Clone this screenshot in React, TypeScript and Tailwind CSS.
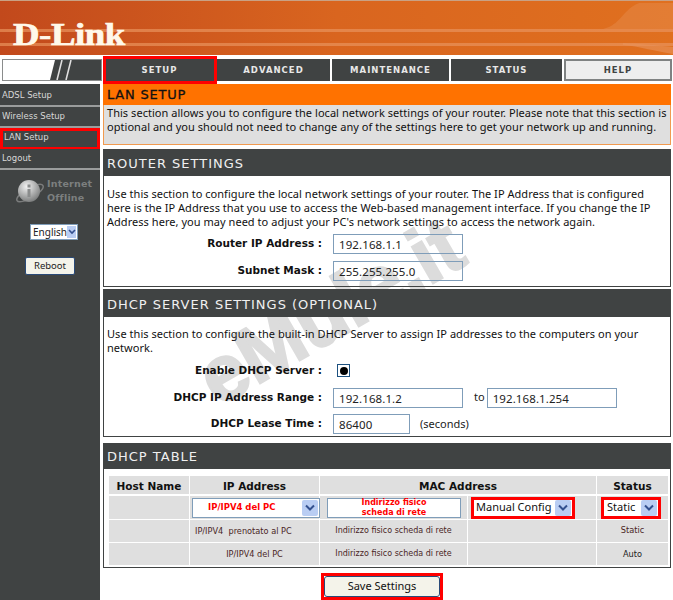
const sans = "font-['Tahoma','Noto_Sans','Liberation_Sans',sans-serif]";

function Chevron() {
  return (
    <span className="flex h-[16px] w-[16px] shrink-0 items-center justify-center rounded-[2px] bg-[#b9cdf3]">
      <svg width="10" height="7" viewBox="0 0 10 7">
        <path d="M1 1.5 L5 5.5 L9 1.5" fill="none" stroke="#33508f" strokeWidth="2" />
      </svg>
    </span>
  );
}

function Tab({ label, w, active }: { label: string; w: string; active?: boolean }) {
  return (
    <div
      className={`flex h-[22px] items-center justify-center text-[8.5px] font-bold tracking-[1px] font-['DejaVu_Sans',sans-serif] ${w} ${
        active ? 'border-2 border-[#7f8282] bg-[#eeeeee] text-[#404343]' : 'bg-[#404343] text-[#e8e8e8]'
      }`}
    >
      {label}
    </div>
  );
}

function SideItem({ label, red }: { label: string; red?: boolean }) {
  return (
    <div
      className={`flex h-[21px] items-center whitespace-nowrap border-b-2 border-[#9a9c9c] pl-[2px] text-[8.5px] text-[#d8d8d8] font-['DejaVu_Sans',sans-serif] ${
        red ? 'border-[3px] border-[#ff0000] pb-[3px] pl-0' : ''
      }`}
    >
      {red ? <span className="-ml-[1px]">{label}</span> : label}
    </div>
  );
}

function SectionHead({ children, h }: { children: string; h: string }) {
  return (
    <div className={`flex items-center whitespace-nowrap bg-[#404343] pl-[3px] pt-[2px] text-[13px] tracking-[1px] text-[#f0f0f0] font-['DejaVu_Sans',sans-serif] ${h}`}>
      {children}
    </div>
  );
}

function Row({ label, children, h }: { label: string; children: React.ReactNode; h: string }) {
  return (
    <div className={`flex items-center ${h}`}>
      <div className="w-[221px] whitespace-nowrap pr-[11px] pt-[1px] text-right text-[10.5px] font-bold text-[#111] font-['DejaVu_Sans',sans-serif]">{label}</div>
      {children}
    </div>
  );
}

function TextBox({ value, w }: { value: string; w: string }) {
  return (
    <div className={`flex h-[20px] items-center border border-[#7f9db9] pl-[5px] pt-[2px] text-[11.5px] tracking-[0.1px] text-[#222] ${w}`}>
      {value}
    </div>
  );
}

function Cell({ children, w, className = '' }: { children?: React.ReactNode; w: string; className?: string }) {
  return <div className={`flex items-center justify-center whitespace-nowrap bg-[#dfdfdf] ${w} ${className}`}>{children}</div>;
}

const para = 'whitespace-nowrap pl-[3px] text-[11px] leading-[14px] tracking-[0.04px]';

export default function App() {
  return (
    <div className={`relative h-[600px] w-[673px] overflow-hidden bg-white text-[11px] text-[#111] ${sans}`}>
      <div className="relative h-[55px] border-t border-[#c9a184] bg-gradient-to-r from-[#c2491c] via-[#d9651f] to-[#e0701f]">
        <div className="absolute inset-x-0 top-[28px] h-[3px] bg-[#e8935c]/70" />
        <div className="absolute inset-x-0 top-[42px] h-[3px] bg-[#e8935c]/70" />
        <svg className="absolute right-0 top-0" width="80" height="54" viewBox="0 0 80 54">
          <path d="M10 28 C28 24 30 8 46 2 L80 2 L80 28 Z" fill="#e58a4a" opacity="0.5" />
          <path d="M30 44 C50 46 60 50 80 53 L80 46 C60 44 50 43 30 42 Z" fill="#e8935c" opacity="0.6" />
        </svg>
        <div className="absolute left-[13px] top-[15px] origin-left scale-x-[1.15] text-[32px] font-bold leading-[36px] tracking-[-0.4px] text-[#fff8ea] [-webkit-text-stroke:0.7px_#fff8ea] font-['Liberation_Serif',serif]">
          D-Link
        </div>
      </div>

      <div className="mt-[3px] flex h-[24px] items-center pl-[2px]">
        <svg className="shrink-0" width="100" height="22" viewBox="0 0 100 22">
          <rect x="0" y="0" width="100" height="22" fill="#404343" />
          <path d="M1 1 H53 L48 21 H1 Z" fill="#ffffff" />
          <path d="M60 1 L55 21" stroke="#e0e0e0" strokeWidth="1.6" />
          <path d="M69 1 L64 21" stroke="#e0e0e0" strokeWidth="1.6" />
          <rect x="0.5" y="0.5" width="99" height="21" fill="none" stroke="#8a8c8c" />
        </svg>
        <div className="ml-[2px] flex gap-[2px]">
          <Tab label="SETUP" w="w-[111px]" />
          <Tab label="ADVANCED" w="w-[113px]" />
          <Tab label="MAINTENANCE" w="w-[117px]" />
          <Tab label="STATUS" w="w-[111px]" />
          <Tab label="HELP" w="w-[108px]" active />
        </div>
      </div>
      <div className="absolute left-[103px] top-[56px] h-[28px] w-[114px] border-[3px] border-[#ff0000]" />

      <div className="mt-[2px] flex">
        <aside className="h-[516px] w-[100px] shrink-0 bg-[#404343] pt-[2px]">
          <SideItem label="ADSL Setup" />
          <SideItem label="Wireless Setup" />
          <SideItem label="LAN Setup" red />
          <SideItem label="Logout" />
          <div className="mt-[5px] flex items-center pl-[14px]">
            <svg width="32" height="32" viewBox="0 0 32 32" className="shrink-0">
              <defs>
                <radialGradient id="g" cx="0.4" cy="0.3" r="0.8">
                  <stop offset="0" stopColor="#f2f2f2" />
                  <stop offset="1" stopColor="#6e7070" />
                </radialGradient>
              </defs>
              <ellipse cx="16" cy="18" rx="15" ry="5" fill="none" stroke="#7a7c7c" strokeWidth="1.5" transform="rotate(-30 16 18)" />
              <circle cx="15" cy="16" r="11" fill="url(#g)" />
              <rect x="13.5" y="14" width="3" height="8" fill="#8a8c8c" />
              <rect x="13.5" y="9.5" width="3" height="3" fill="#8a8c8c" />
            </svg>
            <div className="ml-[1px] text-[9.5px] font-bold leading-[14px] tracking-[0.2px] text-[#7c7f7f] font-['DejaVu_Sans',sans-serif]">
              Internet
              <br />
              Offline
            </div>
          </div>
          <div className="ml-[30px] mt-[17px] flex h-[16px] w-[48px] items-center justify-between border border-[#7f9db9] bg-white pl-[2px] pr-[1px] text-[10px] text-[#222]">
            English
            <span className="flex h-[12px] w-[12px] items-center justify-center bg-[#b9cdf3]">
              <svg width="8" height="6" viewBox="0 0 8 6"><path d="M1 1 L4 4 L7 1" fill="none" stroke="#33508f" strokeWidth="1.6" /></svg>
            </span>
          </div>
          <div className="ml-[25px] mt-[17px] flex h-[18px] w-[50px] items-center justify-center rounded-[2px] border border-[#2a4a78] bg-[#f4f3ea] text-[9.5px] text-[#222]">
            Reboot
          </div>
        </aside>

        <main className="relative ml-[3px] w-[568px]">
          <div
            aria-hidden
            className="absolute left-[82px] top-[188px] -rotate-[30deg] select-none whitespace-nowrap text-[80px] font-bold leading-none tracking-[-1px] text-[#dcdcdc] [-webkit-text-stroke:2px_#dcdcdc] font-['Liberation_Sans',sans-serif]"
          >
            eMule.it
          </div>

          <section className="relative h-[61px] border border-t-0 border-[#f19a4f]">
            <div className="-mx-[1px] flex h-[21px] items-center bg-[#ff7200] pl-[4px] text-[13px] tracking-[0.8px] text-[#111] [-webkit-text-stroke:0.3px_#111] font-['DejaVu_Sans',sans-serif]">
              LAN SETUP
            </div>
            <div className={`h-[39px] bg-[#dfdfdf] pt-[1px] ${para}`}>
              <p>This section allows you to configure the local network settings of your router. Please note that this section is</p>
              <p>optional and you should not need to change any of the settings here to get your network up and running.</p>
            </div>
          </section>

          <section className="relative mt-[4px] h-[138px] border border-[#404343]">
            <SectionHead h="h-[26px]">ROUTER SETTINGS</SectionHead>
            <div className={`pt-[11px] ${para}`}>
              <p>Use this section to configure the local network settings of your router. The IP Address that is configured</p>
              <p>here is the IP Address that you use to access the Web-based management interface. If you change the IP</p>
              <p>Address here, you may need to adjust your PC's network settings to access the network again.</p>
            </div>
            <div className="mt-[1px] pl-[8px]">
              <Row label="Router IP Address :" h="h-[27px]"><TextBox value="192.168.1.1" w="w-[130px]" /></Row>
              <Row label="Subnet Mask :" h="h-[27px]"><TextBox value="255.255.255.0" w="w-[130px]" /></Row>
            </div>
          </section>

          <section className="relative mt-[2px] h-[148px] border border-[#404343]">
            <SectionHead h="h-[27px]">DHCP SERVER SETTINGS (OPTIONAL)</SectionHead>
            <div className={`pt-[10px] ${para}`}>
              <p>Use this section to configure the built-in DHCP Server to assign IP addresses to the computers on your</p>
              <p>network.</p>
            </div>
            <div className="mt-[2px] pl-[8px]">
              <Row label="Enable DHCP Server :" h="h-[27px]">
                <div className="ml-[4px] flex h-[13px] w-[13px] items-center justify-center border border-[#1c5180] bg-white">
                  <div className="h-[8px] w-[8px] rounded-full bg-black" />
                </div>
              </Row>
              <Row label="DHCP IP Address Range :" h="h-[27px]">
                <TextBox value="192.168.1.2" w="w-[130px]" />
                <span className="ml-[11px] text-[11px] text-[#222]">to</span>
                <div className="ml-[2px]"><TextBox value="192.168.1.254" w="w-[130px]" /></div>
              </Row>
              <Row label="DHCP Lease Time :" h="h-[25px]">
                <TextBox value="86400" w="w-[77px]" />
                <span className="ml-[10px] pt-[2px] text-[11px] text-[#222]">(seconds)</span>
              </Row>
            </div>
          </section>

          <section className="relative mt-[6px] h-[125px] border border-t-0 border-[#404343]">
            <SectionHead h="h-[26px]">DHCP TABLE</SectionHead>
            <div className="flex flex-col gap-[1px] pl-[5px] pt-[7px] text-[8.2px] text-[#4a1f1f] font-['DejaVu_Sans',sans-serif]">
              <div className="mb-[1px] flex h-[18px] gap-[1px] text-[10.5px] font-bold text-[#111]">
                <Cell w="w-[80px]" className="pt-[3px]">Host Name</Cell>
                <Cell w="w-[129px]" className="pt-[3px]">IP Address</Cell>
                <Cell w="w-[276px]" className="pt-[3px]">MAC Address</Cell>
                <Cell w="w-[71px]" className="pt-[3px]">Status</Cell>
              </div>
              <div className="flex h-[23px] gap-[1px]">
                <Cell w="w-[80px]" />
                <Cell w="w-[129px]" className="justify-start pl-[2px]">
                  <div className="flex h-[20px] w-[128px] shrink-0 items-center justify-between border border-[#7f9db9] bg-white pr-[1px] text-[8.5px] font-bold text-[#ff0000]">
                    <span className="pl-[15px]">IP/IPV4 del PC</span>
                    <Chevron />
                  </div>
                </Cell>
                <Cell w="w-[147px]" className="justify-start pl-[7px]">
                  <div className="flex h-[20px] w-[134px] flex-col items-center justify-center border border-[#7f9db9] bg-white text-[8px] font-bold leading-[9.5px] text-[#ff0000]">
                    <span>Indirizzo fisico</span>
                    <span>scheda di rete</span>
                  </div>
                </Cell>
                <Cell w="w-[128px]" className="justify-start pl-[3px]">
                  <div className="flex h-[22px] w-[104px] items-center justify-between border-[3px] border-[#ff0000] bg-white pr-[1px] text-[11px] text-[#111] font-['Noto_Sans',sans-serif]">
                    <span className="pl-[2px]">Manual Config</span>
                    <Chevron />
                  </div>
                </Cell>
                <Cell w="w-[71px]" className="justify-start pl-[4px]">
                  <div className="flex h-[22px] w-[60px] items-center justify-between border-[3px] border-[#ff0000] bg-white pr-[1px] text-[11px] text-[#111] font-['Noto_Sans',sans-serif]">
                    <span className="pl-[3px]">Static</span>
                    <Chevron />
                  </div>
                </Cell>
              </div>
              <div className="flex h-[22px] gap-[1px]">
                <Cell w="w-[80px]" />
                <Cell w="w-[129px]" className="justify-start pl-[5px]">IP/IPV4&nbsp; prenotato al PC</Cell>
                <Cell w="w-[147px]"><span className="text-[8px]">Indirizzo fisico scheda di rete</span></Cell>
                <Cell w="w-[128px]" />
                <Cell w="w-[71px]" className="pb-[1px]">Static</Cell>
              </div>
              <div className="flex h-[22px] gap-[1px]">
                <Cell w="w-[80px]" />
                <Cell w="w-[129px]">IP/IPV4 del PC</Cell>
                <Cell w="w-[147px]"><span className="text-[8px]">Indirizzo fisico scheda di rete</span></Cell>
                <Cell w="w-[128px]" />
                <Cell w="w-[71px]"><span className="text-[#222]">Auto</span></Cell>
              </div>
            </div>
          </section>

          <div className="ml-[218px] mt-[5px] flex h-[27px] w-[122px] items-center justify-center border-[3px] border-[#ff0000]">
            <div className="flex h-full w-full items-center justify-center rounded-[3px] border border-[#2a4a78] bg-[#f4f3ea] text-[11px] text-[#111]">
              Save Settings
            </div>
          </div>
        </main>
      </div>
    </div>
  );
}
